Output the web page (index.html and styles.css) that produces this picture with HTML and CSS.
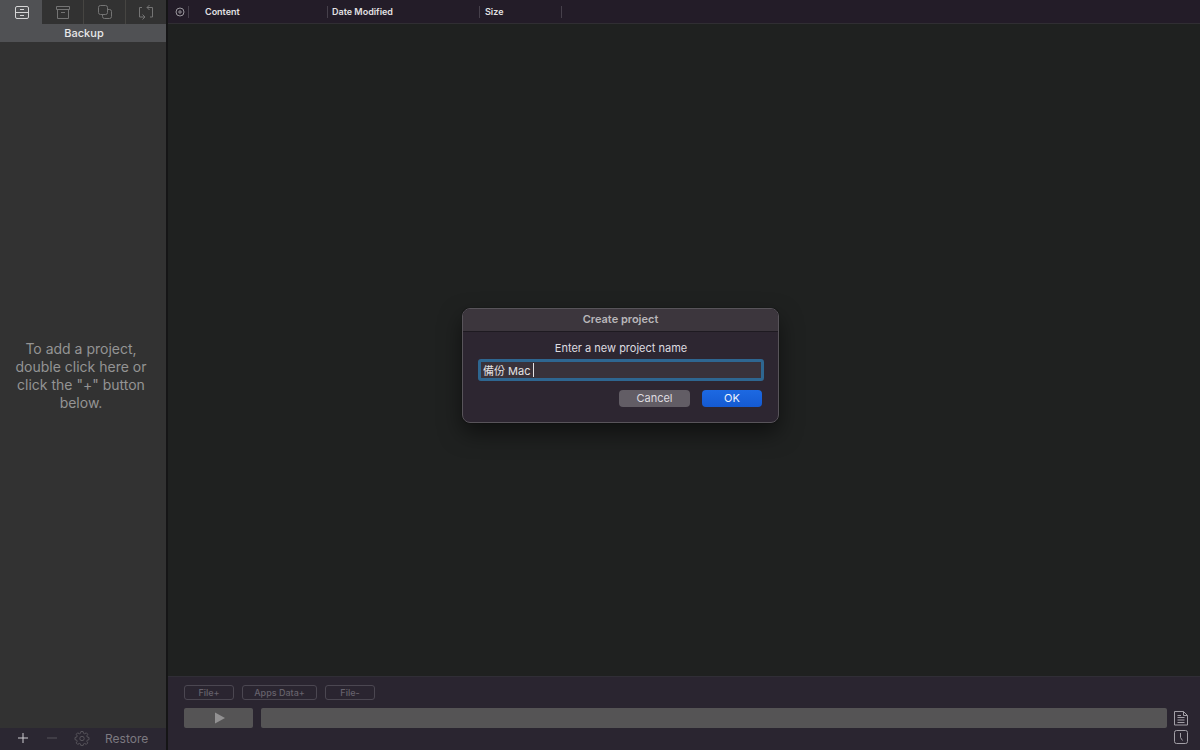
FILE: index.html
```
<!DOCTYPE html>
<html lang="en">
<head>
<meta charset="utf-8">
<title>Backup</title>
<link rel="stylesheet" href="styles.css">
</head>
<body>
<div class="app">
  <aside class="sidebar">
    <nav class="tabs">
      <button class="tab tab-active" aria-label="Backup"><svg class="icon" viewBox="0 0 16 16"><rect x="1.500" y="2.500" width="13" height="12" rx="1.500"/><path d="M1.500 8.500h13M6 5.500h4M6 11.500h4"/></svg></button>
      <button class="tab" aria-label="Archive"><svg class="icon" viewBox="0 0 16 16"><path d="M1.500 2.500h13v3h-13zM2.500 5.500v9h11v-9M6 8.500h4"/></svg></button>
      <button class="tab" aria-label="Clone"><svg class="icon" viewBox="0 0 16 16"><rect x="1.500" y="1.500" width="9" height="9" rx="2"/><path d="M10.500 5.500h2a2 2 0 0 1 2 2v5a2 2 0 0 1-2 2h-5a2 2 0 0 1-2-2v-2"/></svg></button>
      <button class="tab" aria-label="Synchronize"><svg class="icon" viewBox="0 0 16 16"><path d="M4 3.500H1.500v9.500H7M4.500 10.500L7 13l-2.500 2.500M12 13h2.500V3.500H9M11.500 1L9 3.500 11.500 6"/></svg></button>
    </nav>
    <h1 class="sidebar-title">Backup</h1>
    <div class="empty"><p class="empty-text">To add a project,<br>double click here or<br>click the "+" button<br>below.</p></div>
    <footer class="sidebar-actions">
      <button class="action action-on" aria-label="Add project"><svg class="icon-small" viewBox="0 0 12 12"><path d="M6 1v10M1 6h10"/></svg></button>
      <button class="action" aria-label="Remove project"><svg class="icon-small" viewBox="0 0 12 12"><path d="M1 6h10"/></svg></button>
      <button class="action" aria-label="Settings"><svg class="icon" viewBox="0 0 16 16"><path d="M6.900 1.500h2.200l.4 1.800 1.200.5 1.600-1 1.500 1.500-1 1.600.5 1.200 1.700.4v2.200l-1.700.4-.5 1.200 1 1.600-1.500 1.500-1.600-1-1.200.5-.4 1.700H6.900l-.4-1.700-1.200-.5-1.600 1-1.500-1.500 1-1.600-.5-1.200L1 9.700V7.500l1.700-.4.5-1.200-1-1.600 1.500-1.500 1.600 1 1.200-.5z"/><circle cx="8" cy="8.500" r="2.200"/></svg></button>
      <button class="restore">Restore</button>
    </footer>
  </aside>
  <main class="main">
    <table class="files">
      <thead><tr>
        <th class="col-mark"><svg class="target" viewBox="0 0 10 10"><circle cx="5" cy="5" r="4"/><circle cx="5" cy="5" r="1.200"/></svg></th>
        <th class="col-content">Content</th>
        <th class="col-date">Date Modified</th>
        <th class="col-size">Size</th>
        <th></th>
      </tr></thead>
    </table>
    <section class="panel">
      <div class="file-buttons">
        <button class="outline">File+</button>
        <button class="outline outline-wide">Apps Data+</button>
        <button class="outline">File-</button>
      </div>
      <div class="run-row">
        <button class="play" aria-label="Start"><svg class="play-icon" viewBox="0 0 10 12"><path d="M0 .5L10 6 0 11.500z"/></svg></button>
        <div class="progress"></div>
        <div class="side-icons">
          <button class="log" aria-label="Log"><svg class="icon" viewBox="0 0 16 16"><path d="M1.500 1.500h9l4 4v9.500h-13zM10.500 1.500v4h4M4.500 5.500H8M4.500 7.500h7M4.500 10h7M4.500 12.500h7"/></svg></button>
          <button class="log" aria-label="Schedule"><svg class="icon" viewBox="0 0 16 16"><rect x="1.500" y="1.500" width="13" height="13" rx="2"/><path d="M7.500 4v4.500l2 3"/></svg></button>
        </div>
      </div>
    </section>
  </main>
</div>
<form class="dialog" role="dialog" aria-labelledby="dialog-title">
  <h2 class="dialog-title" id="dialog-title">Create project</h2>
  <div class="dialog-body">
    <label class="dialog-label" for="name">Enter a new project name</label>
    <div class="field"><input class="name" id="name" type="text" value="備份 Mac "><span class="caret"></span></div>
    <div class="dialog-actions">
      <button class="push push-cancel" type="button">Cancel</button>
      <button class="push push-ok" type="button">OK</button>
    </div>
  </div>
</form>
</body>
</html>
```
FILE: styles.css
```
* { box-sizing: border-box; }
body {
  margin: 0;
  background: #1f2120;
  color: #dedce0;
  font-family: Inter, "Noto Sans CJK TC", sans-serif;
  font-size: 11px;
}
button { margin: 0; padding: 0; border: 0; background: none; color: inherit; font: inherit; }
svg { display: block; fill: none; stroke: currentColor; stroke-width: 1; }
.icon { width: 16px; height: 16px; }
.icon-small { width: 12px; height: 12px; }
.app { display: flex; height: 100vh; }

.sidebar {
  display: flex;
  flex-direction: column;
  flex: 0 0 168px;
  border-right: 2px solid #151516;
  background: #323232;
}
.tabs { display: flex; height: 24px; color: #747474; }
.tab {
  display: flex;
  flex: 1;
  align-items: center;
  justify-content: center;
  padding-left: 1px;
  border-left: 1px solid #464542;
}
.tab-active { border-left-color: #505154; background: #505154; color: #d5d5d6; }
.tab-active + .tab { border-left-color: #323232; }
.sidebar-title {
  height: 18px;
  margin: 0;
  padding-left: 2px;
  background: #505154;
  color: #e8e8e9;
  font-size: 11px;
  font-weight: 500;
  line-height: 18px;
  text-align: center;
}
.empty { display: flex; flex: 1; align-items: center; justify-content: center; padding-bottom: 18px; }
.empty-text { margin: 0; color: #949494; font-size: 14px; line-height: 18px; text-align: center; white-space: nowrap; padding-right: 4px; }
.sidebar-actions {
  display: flex;
  align-items: center;
  gap: 15px;
  height: 22px;
  padding: 0 0 2px 16px;
  background: #2b2732;
  color: #57545b;
}
.action-on { color: #d0ced2; }
.action .icon-small { margin: 0 1px; }
.restore { color: #7c7980; font-size: 12px; }

.main { display: flex; flex: 1; flex-direction: column; min-width: 0; }
.files {
  width: 100%;
  height: 24px;
  border-collapse: collapse;
  table-layout: fixed;
  background: #231c28;
  border-bottom: 1px solid #302e33;
}
.files th {
  padding: 0;
  background: linear-gradient(#46404b, #46404b) right 6px / 1px 12px no-repeat;
  color: #e2e0e3;
  font-size: 9px;
  font-weight: 600;
  text-align: left;
}
.files th:last-child { background: none; }
.files .col-mark { width: 21px; }
.files .col-content { width: 139px; padding-left: 16px; }
.files .col-date { width: 152px; padding-left: 4px; }
.files .col-size { width: 82px; padding-left: 5px; }
.target { width: 10px; height: 10px; margin-left: 7px; color: #9a979d; }

.panel {
  display: flex;
  flex-direction: column;
  gap: 8px;
  height: 74px;
  margin-top: auto;
  padding: 8px 11px 0 16px;
  border-top: 1px solid #302e36;
  background: #2a2530;
}
.file-buttons { display: flex; gap: 8px; }
.outline {
  width: 50px;
  height: 15px;
  border: 1px solid #4b4751;
  border-radius: 3px;
  color: #66626c;
  font-size: 9px;
  font-weight: 500;
}
.outline-wide { width: 75px; }
.run-row { display: flex; align-items: flex-start; }
.play {
  display: flex;
  align-items: center;
  justify-content: center;
  width: 69px;
  height: 20px;
  margin-right: 8px;
  padding-left: 2px;
  border-radius: 2px;
  background: #555455;
  color: #929192;
}
.play-icon { width: 10px; height: 12px; fill: currentColor; stroke: none; }
.progress { flex: 1; height: 20px; border-radius: 2px; background: #555455; }
.side-icons { display: flex; flex-direction: column; gap: 3px; margin: 2px 0 0 6px; color: #a29fa6; }

.dialog {
  position: absolute;
  top: 308px;
  left: calc(50% - 138px);
  width: 317px;
  overflow: hidden;
  border: 1px solid #58545a;
  border-radius: 8px;
  background: #2d2631;
  box-shadow: 0 0 1px #000, 0 10px 22px rgba(0, 0, 0, .5);
}
.dialog-title {
  height: 23px;
  margin: 0;
  border-bottom: 1px solid #1e1a21;
  background: #3c363d;
  color: #b9b6ba;
  font-size: 11px;
  font-weight: 600;
  line-height: 21px;
  text-align: center;
}
.dialog-body { padding: 8px 14px 15px 15px; }
.dialog-label { display: block; line-height: 16px; text-align: center; }
.field { position: relative; margin-top: 3px; }
.name {
  display: block;
  width: 100%;
  height: 22px;
  padding: 0 2px;
  border: 3px solid #2e6690;
  border-radius: 3px;
  outline: 0;
  background: #39323a;
  color: #e4e2e5;
  font: inherit;
}
.caret { position: absolute; top: 4px; left: 55px; width: 1px; height: 14px; background: #e4e2e5; }
.dialog-actions { display: flex; justify-content: flex-end; gap: 12px; margin-top: 9px; padding-right: 2px; }
.push { width: 71px; height: 17px; border-radius: 4px; line-height: 17px; }
.push-cancel { background: #625d65; }
.push-ok { width: 60px; background: linear-gradient(#1d69e2, #145ad2); color: #eef3fc; }
```
